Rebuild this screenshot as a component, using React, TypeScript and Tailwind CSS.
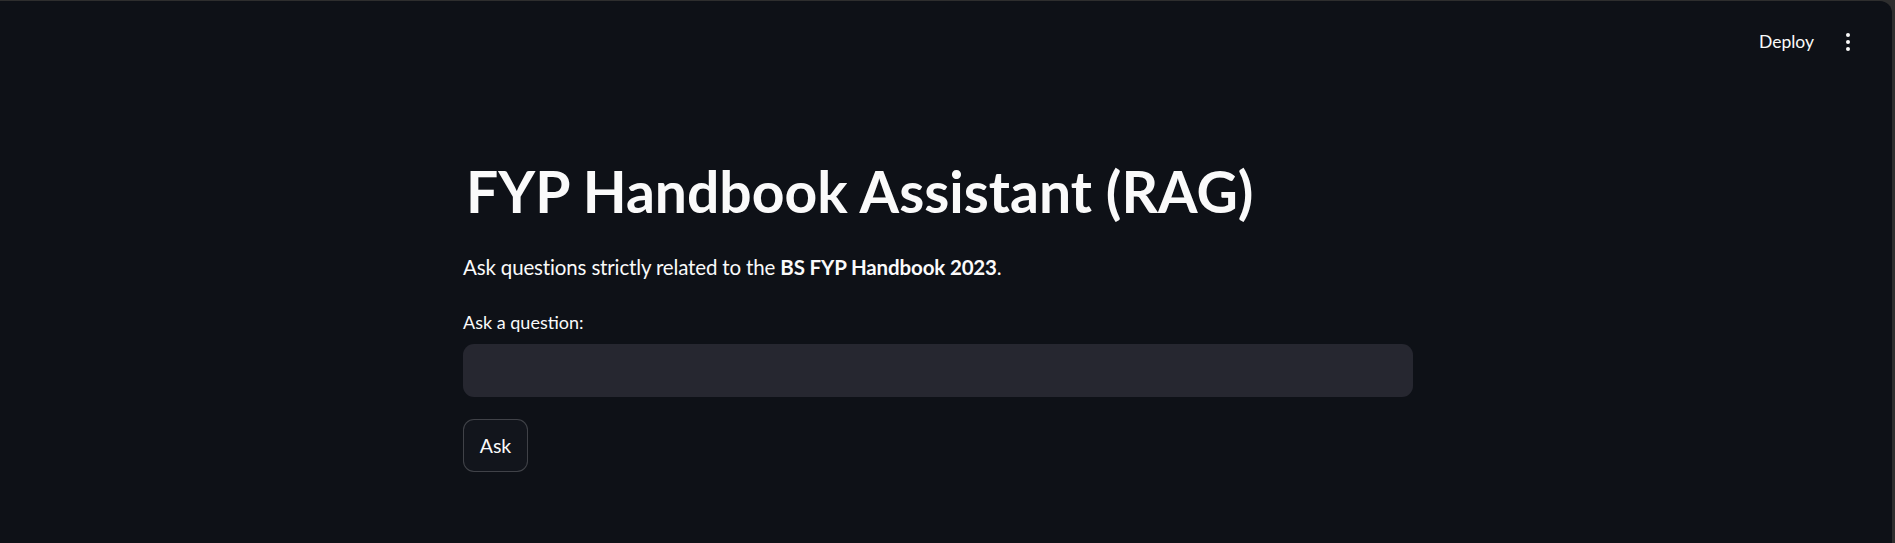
import React, { useState } from 'react';

const MoreVert: React.FC = () => (
  <svg width="4" height="18" viewBox="0 0 4 18" fill="currentColor">
    <circle cx="2" cy="2" r="2" />
    <circle cx="2" cy="9" r="2" />
    <circle cx="2" cy="16" r="2" />
  </svg>
);

const App: React.FC = () => {
  const [question, setQuestion] = useState('');

  return (
    <div className="h-[543px] w-full overflow-hidden bg-[#2e2e2e] pt-px pr-[3px]">
      <div className="h-full rounded-tr-[12px] bg-[#0e1117] text-[#fafafa] font-['Lato','Noto_Sans',sans-serif]">
        {/* Toolbar */}
        <header className="flex h-[82px] items-center justify-end gap-[32px] pr-[42px]">
          <button className="text-[17.5px] leading-none text-[#fafafa]">Deploy</button>
          <button className="flex items-center text-[#fafafa]">
            <MoreVert />
          </button>
        </header>

        {/* Main block */}
        <main className="pl-[463px] pt-[74px]">
          <div className="w-[950px]">
            <h1 className="pl-[3px] text-[57px] font-bold leading-[1.2]">FYP Handbook Assistant (RAG)</h1>
            <p className="mt-[26px] text-[20.5px] leading-[32px] tracking-[-0.15px]">
              Ask questions strictly related to the <strong className="font-bold">BS FYP Handbook 2023</strong>.
            </p>

            <label htmlFor="q" className="mt-[27px] block text-[18px] leading-[24px]">Ask a question:</label>
            <input
              id="q"
              value={question}
              onChange={e => setQuestion(e.target.value)}
              className="mt-[10px] block h-[53px] w-full rounded-[11px] bg-[#262730] px-4 text-[21px] text-[#fafafa] outline-none"
            />

            <button className="mt-[22px] flex h-[53px] w-[65px] items-center justify-center rounded-[11px] border border-[#fafafa]/20 bg-[#12151c] text-[19.5px] text-[#fafafa]">
              Ask
            </button>
          </div>
        </main>
      </div>
    </div>
  );
};

export default App;
